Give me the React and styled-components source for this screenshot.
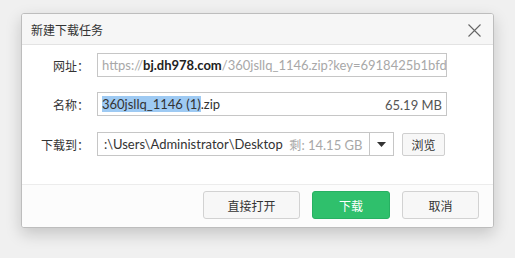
import React from 'react';
import styled, { createGlobalStyle } from 'styled-components';

const GlobalStyle = createGlobalStyle`
  html, body {
    margin: 0;
    padding: 0;
    background: #f0f0f0;
  }
  body {
    font-family: "Noto Sans CJK SC", sans-serif;
    font-size: 12px;
    color: #333;
  }
`;

const Page = styled.div`
  width: 515px;
  height: 258px;
  padding: 13px 0 0 21px;
  box-sizing: border-box;
`;

const Dialog = styled.div`
  width: 473px;
  height: 215px;
  box-sizing: border-box;
  background: #fff;
  border: 1px solid #bdbdbd;
  border-radius: 3px;
  box-shadow: 0 6px 16px rgba(0, 0, 0, 0.18);
  display: flex;
  flex-direction: column;
  overflow: hidden;
`;

const TitleBar = styled.div`
  height: 30px;
  flex: none;
  display: flex;
  align-items: center;
  justify-content: space-between;
  background: #f6f6f6;
  border-bottom: 1px solid #e3e3e3;
  padding: 0 12px 0 9px;
`;

const Title = styled.div`
  font-size: 12px;
  color: #333;
`;

const Close = styled.svg`
  width: 13px;
  height: 13px;
  margin-top: 3px;
`;

const Body = styled.div`
  flex: 1;
  display: flex;
  flex-direction: column;
  padding: 8px 0 0;
`;

const Row = styled.div`
  display: flex;
  align-items: center;
  margin-top: ${p => p.$top || 0}px;
`;

const Label = styled.div`
  width: 75px;
  flex: none;
  text-align: right;
  padding-right: 8px;
  box-sizing: border-box;
  color: #333;
  font-size: 12px;
`;

const Latin = styled.span`
  font-family: Lato, "Noto Sans CJK SC", sans-serif;
  font-size: 13px;
`;

const Field = styled.div`
  width: 350px;
  height: 24px;
  box-sizing: border-box;
  border: 1px solid #c6c6c6;
  display: flex;
  align-items: center;
  padding: 0 4px;
  white-space: nowrap;
  overflow: hidden;
  color: #333;
`;

const Faint = styled.span`
  color: #a8a8a8;
`;

const Strong = styled.span`
  color: #222;
  font-weight: bold;
`;

const Selected = styled.span`
  background: #9ecaf3;
`;

const Size = styled.span`
  margin-left: auto;
  color: #555;
`;

const PathBox = styled.div`
  width: 297px;
  height: 24px;
  box-sizing: border-box;
  border: 1px solid #c6c6c6;
  display: flex;
  margin-right: 8px;
`;

const PathText = styled.div`
  flex: 1;
  display: flex;
  align-items: center;
  padding-left: 6px;
  white-space: nowrap;
  overflow: hidden;
  color: #333;
`;

const DropBtn = styled.div`
  width: 23px;
  border-left: 1px solid #c6c6c6;
  display: flex;
  align-items: center;
  justify-content: center;
`;

const Browse = styled.div`
  width: 43px;
  height: 23px;
  box-sizing: border-box;
  border: 1px solid #cfcfcf;
  border-radius: 2px;
  background: #f7f7f7;
  display: flex;
  align-items: center;
  justify-content: center;
  color: #333;
`;

const Footer = styled.div`
  height: 43px;
  flex: none;
  border-top: 1px solid #ececec;
  background: #fcfcfc;
  display: flex;
  justify-content: flex-end;
  align-items: flex-start;
  padding: 6px 14px 0 0;
  box-sizing: border-box;
  gap: 12px;
`;

const Button = styled.div`
  width: ${p => p.$w}px;
  height: 28px;
  box-sizing: border-box;
  border-radius: 3px;
  border: 1px solid ${p => (p.$primary ? '#27b062' : '#d2d2d2')};
  background: ${p => (p.$primary ? '#2fc06c' : '#f7f7f7')};
  color: ${p => (p.$primary ? '#fff' : '#333')};
  display: flex;
  align-items: center;
  justify-content: center;
  font-size: 12px;
`;

export default function App() {
  return (
    <Page>
      <GlobalStyle />
      <Dialog>
        <TitleBar>
          <Title>新建下载任务</Title>
          <Close viewBox="0 0 13 13">
            <path d="M0.5 0.5 L12.5 12.5 M12.5 0.5 L0.5 12.5" stroke="#666" strokeWidth="1.1" fill="none" />
          </Close>
        </TitleBar>
        <Body>
          <Row>
            <Label>网址：</Label>
            <Field>
              <Latin>
                <Faint>https://</Faint>
                <Strong>bj.dh978.com</Strong>
                <Faint>/360jsllq_1146.zip?key=6918425b1bfd</Faint>
              </Latin>
            </Field>
          </Row>
          <Row $top={15}>
            <Label>名称：</Label>
            <Field>
              <Latin>
                <Selected>360jsllq_1146 (1)</Selected>.zip
              </Latin>
              <Size><Latin>65.19 MB</Latin></Size>
            </Field>
          </Row>
          <Row $top={16}>
            <Label>下载到：</Label>
            <PathBox>
              <PathText>
                <Latin>:\Users\Administrator\Desktop&nbsp;&nbsp;</Latin>
                <Faint>剩<Latin>: 14.15 GB</Latin></Faint>
              </PathText>
              <DropBtn>
                <svg width="9" height="5" viewBox="0 0 9 5">
                  <path d="M0 0 L9 0 L4.5 5 Z" fill="#333" />
                </svg>
              </DropBtn>
            </PathBox>
            <Browse>浏览</Browse>
          </Row>
        </Body>
        <Footer>
          <Button $w={97}>直接打开</Button>
          <Button $w={78} $primary>下载</Button>
          <Button $w={77}>取消</Button>
        </Footer>
      </Dialog>
    </Page>
  );
}
